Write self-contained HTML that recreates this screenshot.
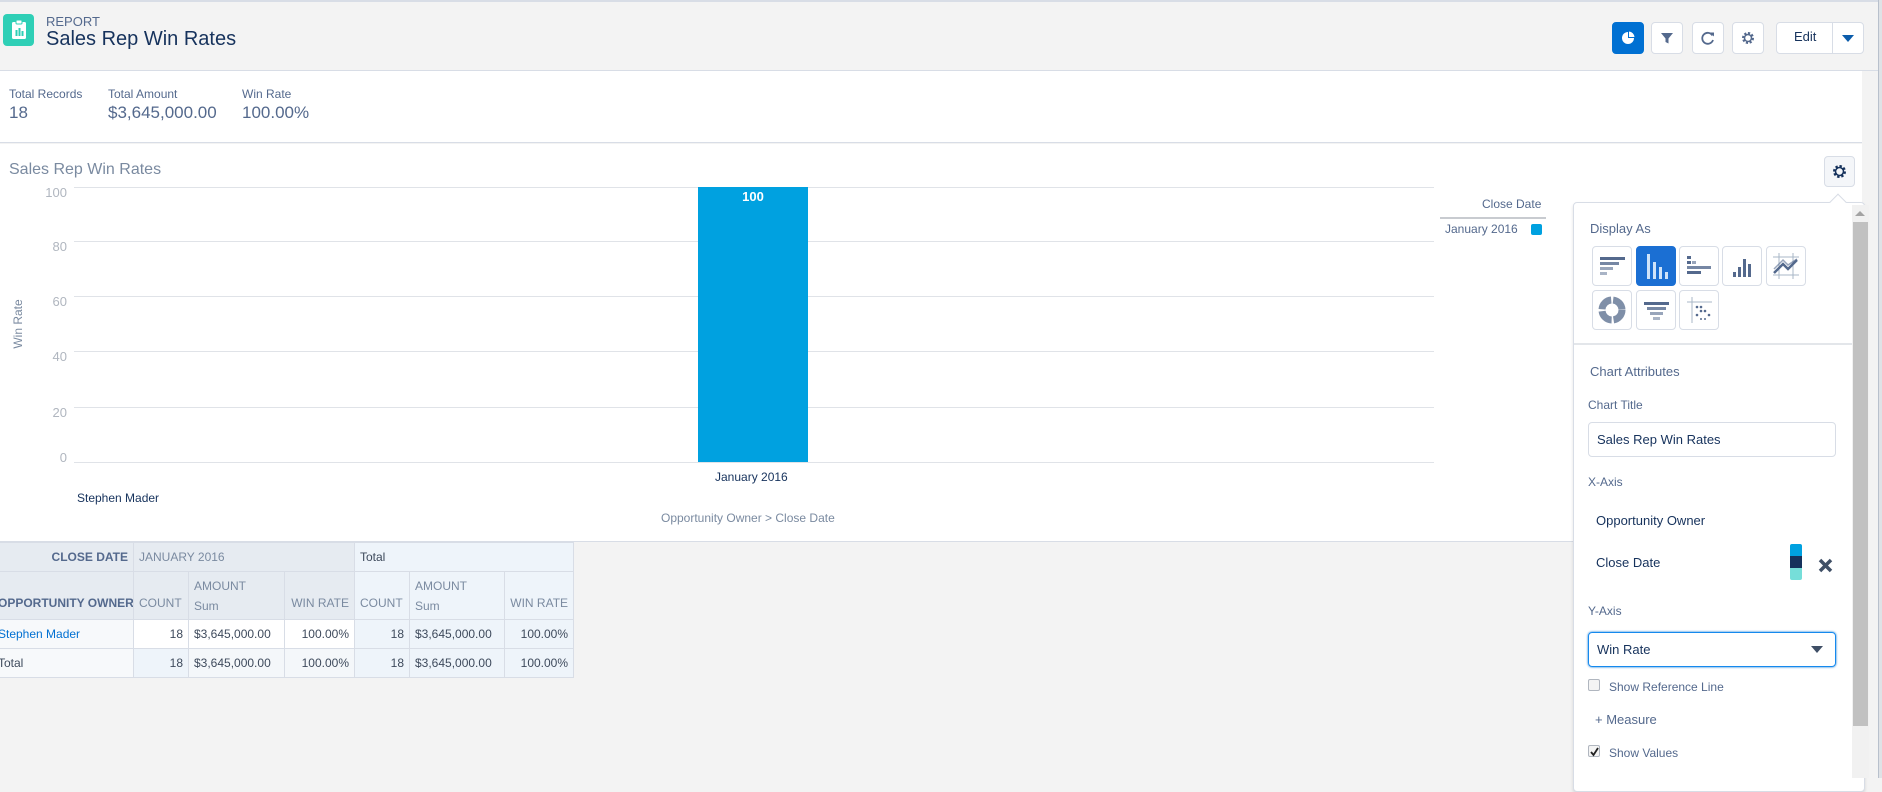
<!DOCTYPE html>
<html><head><meta charset="utf-8"><style>
*{box-sizing:border-box;margin:0;padding:0}
body{width:1882px;height:778px;overflow:hidden;background:#f3f3f3;font-family:"Liberation Sans",sans-serif;color:#16325c;position:relative}
.a{position:absolute;white-space:nowrap}
.btn{position:absolute;top:22px;width:32px;height:32px;border:1px solid #d8dde6;border-radius:4px;background:#fff}
.lbl{color:#54698d;font-size:13px}
.ic{position:absolute;width:40px;height:40px;border:1px solid #d8dde6;border-radius:4px;background:#fff}
table{table-layout:fixed}
td{border:1px solid #d8dde6;font-size:12px;color:#3e4a5c;padding:0 5px;white-space:nowrap;overflow:hidden}
</style></head><body>
<!-- header -->
<div class="a" style="left:0;top:0;width:1882px;height:71px;background:#f3f3f3;border-top:2px solid #d8dde6;border-bottom:1px solid #d8dde6"></div>
<div class="a" style="left:3px;top:14px;width:31px;height:32px;border-radius:4px;background:#2fcfb6"></div>
<svg class="a" style="left:9px;top:19px" width="20" height="22" viewBox="0 0 20 22"><rect x="3" y="3" width="14" height="17" rx="1.5" fill="#fff"/><rect x="7" y="1" width="6" height="4" rx="1" fill="#fff" stroke="#2fcfb6" stroke-width="1"/><rect x="6.5" y="11" width="2" height="6" fill="#2fcfb6"/><rect x="9.5" y="9" width="2" height="8" fill="#2fcfb6"/><rect x="12.5" y="12" width="2" height="5" fill="#2fcfb6"/></svg>
<div class="a" style="left:46px;top:14px;font-size:13px;color:#54698d">REPORT</div>
<div class="a" style="left:46px;top:28px;font-size:20px;color:#16325c">Sales Rep Win Rates</div>
<div class="btn" style="left:1612px;background:#0070d2;border-color:#0070d2"><svg width="30" height="30" viewBox="0 0 30 30"><circle cx="15" cy="15" r="6" fill="#fff"/><path d="M15 15 L15 8 A7 7 0 0 1 22 15Z" fill="#0070d2"/><path d="M16 14 L16 8.5 A6 6 0 0 1 21.5 14Z" fill="#fff"/></svg></div>
<div class="btn" style="left:1651px"><svg width="30" height="30" viewBox="0 0 30 30"><path d="M9 10h12l-4.5 5.5v5l-3 -1.5v-3.5z" fill="#54698d"/></svg></div>
<div class="btn" style="left:1692px"><svg width="30" height="30" viewBox="0 0 30 30"><path d="M19.5 12.5A5.5 5.5 0 1 0 20 17" fill="none" stroke="#54698d" stroke-width="1.8"/><path d="M17 9.5h4v4z" fill="#54698d"/></svg></div>
<div class="btn" style="left:1732px"><svg width="30" height="30" viewBox="0 0 30 30"><circle cx="15" cy="15" r="4.5" fill="none" stroke="#54698d" stroke-width="3" stroke-dasharray="2 1.5"/><circle cx="15" cy="15" r="3.5" fill="none" stroke="#54698d" stroke-width="1.5"/></svg></div>
<div class="btn" style="left:1776px;width:88px"></div>
<div class="a" style="left:1832px;top:23px;width:1px;height:30px;background:#d8dde6"></div>
<div class="a" style="left:1794px;top:29px;font-size:13px;color:#16325c">Edit</div>
<svg class="a" style="left:1841px;top:34px" width="14" height="9"><path d="M1 1h12l-6 7z" fill="#0b5cab"/></svg>
<!-- stats -->
<div class="a" style="left:0;top:71px;width:1862px;height:72px;background:#fff;border-bottom:1px solid #d8dde6"></div>
<div class="a lbl" style="left:9px;top:87px;font-size:12px">Total Records</div>
<div class="a" style="left:9px;top:103px;font-size:17px;color:#54698d">18</div>
<div class="a lbl" style="left:108px;top:87px;font-size:12px">Total Amount</div>
<div class="a" style="left:108px;top:103px;font-size:17px;color:#54698d">$3,645,000.00</div>
<div class="a lbl" style="left:242px;top:87px;font-size:12px">Win Rate</div>
<div class="a" style="left:242px;top:103px;font-size:17px;color:#54698d">100.00%</div>
<!-- chart -->
<div class="a" style="left:0;top:144px;width:1862px;height:398px;background:#fff;border-bottom:1px solid #d8dde6"></div>
<div class="a" style="left:9px;top:161px;font-size:16px;color:#7a8aa0">Sales Rep Win Rates</div>
<svg class="a" style="left:0;top:180px" width="1440" height="300">
<g stroke="#e0e3e8" stroke-width="1"><line x1="74" x2="1434" y1="7.5" y2="7.5"/><line x1="74" x2="1434" y1="61.5" y2="61.5"/><line x1="74" x2="1434" y1="116.5" y2="116.5"/><line x1="74" x2="1434" y1="171.5" y2="171.5"/><line x1="74" x2="1434" y1="227.5" y2="227.5"/><line x1="74" x2="1434" y1="282.5" y2="282.5"/></g>
<g font-size="13" fill="#b0b6bf" text-anchor="end" font-family="Liberation Sans"><text x="67" y="17">100</text><text x="67" y="71">80</text><text x="67" y="126">60</text><text x="67" y="181">40</text><text x="67" y="237">20</text><text x="67" y="282">0</text></g>
<rect x="698" y="7" width="110" height="275" fill="#00a1e0"/>
<text x="753" y="21" fill="#fff" font-size="13" font-weight="bold" text-anchor="middle" font-family="Liberation Sans">100</text>
<text transform="translate(22,144) rotate(-90)" fill="#7a8aa0" font-size="12" text-anchor="middle" font-family="Liberation Sans">Win Rate</text>
</svg>
<div class="a" style="left:715px;top:470px;font-size:12px;color:#16325c">January 2016</div>
<div class="a" style="left:77px;top:491px;font-size:12px;color:#16325c">Stephen Mader</div>
<div class="a" style="left:661px;top:511px;font-size:12px;color:#7a8aa0">Opportunity Owner &gt; Close Date</div>
<div class="a" style="left:1482px;top:197px;font-size:12px;color:#54698d">Close Date</div>
<div class="a" style="left:1440px;top:217px;width:106px;height:2px;background:#c8cbd0"></div>
<div class="a" style="left:1445px;top:222px;font-size:12px;color:#54698d">January 2016</div>
<div class="a" style="left:1531px;top:224px;width:11px;height:11px;border-radius:2px;background:#00a1e0"></div>
<!-- table -->
<table class="a" style="left:-8px;top:542px;width:581px;border-collapse:collapse;background:#fff">
<colgroup><col style="width:141px"><col style="width:55px"><col style="width:96px"><col style="width:70px"><col style="width:55px"><col style="width:95px"><col style="width:69px"></colgroup>
<tr style="height:29px"><td style="text-align:right;background:#e6ebf1;font-weight:bold;color:#54698d">CLOSE DATE</td><td colspan="3" style="background:#e6ebf1;color:#7a8aa0">JANUARY 2016</td><td colspan="3" style="background:#eef4fa;color:#3e4a5c">Total</td></tr>
<tr style="height:48px"><td style="text-align:right;background:#e6ebf1;font-weight:bold;color:#54698d;vertical-align:bottom;padding-bottom:9px">OPPORTUNITY OWNER</td><td style="background:#e6ebf1;color:#7a8aa0;vertical-align:bottom;padding-bottom:9px">COUNT</td><td style="background:#e6ebf1;color:#7a8aa0;line-height:20px">AMOUNT<br>Sum</td><td style="background:#e6ebf1;color:#7a8aa0;text-align:right;vertical-align:bottom;padding-bottom:9px">WIN RATE</td><td style="background:#eef4fa;color:#7a8aa0;vertical-align:bottom;padding-bottom:9px">COUNT</td><td style="background:#eef4fa;color:#7a8aa0;line-height:20px">AMOUNT<br>Sum</td><td style="background:#eef4fa;color:#7a8aa0;text-align:right;vertical-align:bottom;padding-bottom:9px">WIN RATE</td></tr>
<tr style="height:29px"><td style="background:#f7f9fb;color:#0070d2">Stephen Mader</td><td style="text-align:right">18</td><td>$3,645,000.00</td><td style="text-align:right">100.00%</td><td style="text-align:right;background:#eef4fa">18</td><td style="background:#eef4fa">$3,645,000.00</td><td style="text-align:right;background:#eef4fa">100.00%</td></tr>
<tr style="height:29px"><td style="background:#f7f9fb">Total</td><td style="text-align:right;background:#eef4fa">18</td><td style="background:#f4f7fa">$3,645,000.00</td><td style="text-align:right;background:#f4f7fa">100.00%</td><td style="text-align:right;background:#eef4fa">18</td><td style="background:#eef4fa">$3,645,000.00</td><td style="text-align:right;background:#eef4fa">100.00%</td></tr>
</table>
<!-- right edge -->
<div class="a" style="left:1878px;top:0;width:4px;height:778px;background:#dfe2e6;border-left:1px solid #b8c0cc"></div>
<!-- chart gear -->
<div class="a" style="left:1824px;top:156px;width:31px;height:31px;border:1px solid #d8dde6;border-radius:4px;background:#f4f6f9"></div>
<svg class="a" style="left:1831px;top:163px" width="17" height="17" viewBox="0 0 17 17"><circle cx="8.5" cy="8.5" r="5" fill="none" stroke="#16325c" stroke-width="3" stroke-dasharray="2.2 1.7"/><circle cx="8.5" cy="8.5" r="4" fill="none" stroke="#16325c" stroke-width="1.6"/></svg>
<!-- popover -->
<div class="a" style="left:1573px;top:202px;width:292px;height:590px;background:#fff;border:1px solid #d8dde6;border-radius:4px;box-shadow:0 2px 3px rgba(0,0,0,.12)"></div>
<div class="a" style="left:1832px;top:196px;width:12px;height:12px;background:#fff;border-left:1px solid #d8dde6;border-top:1px solid #d8dde6;transform:rotate(45deg)"></div>
<div class="a" style="left:1852px;top:205px;width:17px;height:573px;background:#f1f1f1"></div>
<svg class="a" style="left:1855px;top:210px" width="11" height="7"><path d="M0 6h10l-5-5z" fill="#a3a3a3"/></svg>
<div class="a" style="left:1853px;top:222px;width:15px;height:504px;background:#c1c1c1"></div>
<div class="a lbl" style="left:1590px;top:221px">Display As</div>
<div class="ic" style="left:1592px;top:246px"><svg width="38" height="38"><g fill="#54698d"><rect x="7" y="10" width="25" height="3"/><rect x="7" y="15" width="19" height="3" opacity=".8"/><rect x="7" y="20" width="13" height="3" opacity=".6"/><rect x="7" y="25" width="7" height="3" opacity=".5"/></g></svg></div>
<div class="ic" style="left:1636px;top:246px;background:#1b6fd3;border-color:#1b6fd3"><svg width="38" height="38"><g fill="#cfe3f9"><rect x="10" y="7" width="3" height="25"/><rect x="16" y="15" width="3" height="17"/><rect x="22" y="20" width="3" height="12"/><rect x="28" y="25" width="3" height="7"/></g></svg></div>
<div class="ic" style="left:1679px;top:246px"><svg width="38" height="38"><g fill="#54698d"><rect x="7" y="9" width="4" height="3"/><rect x="7" y="14" width="4" height="3"/><rect x="12" y="14" width="4" height="3" opacity=".6"/><rect x="7" y="19" width="24" height="3" opacity=".8"/><rect x="7" y="24" width="14" height="3"/></g></svg></div>
<div class="ic" style="left:1722px;top:246px"><svg width="38" height="38"><g fill="#54698d"><rect x="10" y="25" width="3" height="5"/><rect x="15" y="20" width="3" height="10"/><rect x="20" y="12" width="3" height="18"/><rect x="25" y="17" width="3" height="13"/></g></svg></div>
<div class="ic" style="left:1766px;top:246px"><svg width="38" height="38"><g stroke="#a8b7c7" stroke-width="1"><line x1="6" x2="32" y1="10" y2="10"/><line x1="6" x2="32" y1="28" y2="28"/><line x1="12" x2="12" y1="6" y2="32"/><line x1="26" x2="26" y1="6" y2="32"/></g><path d="M7 26l9-9 5 5 9-9" fill="none" stroke="#54698d" stroke-width="2.5"/><path d="M7 22l9-9 5 5 9-6" fill="none" stroke="#54698d" stroke-width="1.5" opacity=".6"/></svg></div>
<div class="ic" style="left:1592px;top:290px"><svg width="38" height="38"><circle cx="19" cy="19" r="10" fill="none" stroke="#7f8fa8" stroke-width="7" stroke-dasharray="14 2"/></svg></div>
<div class="ic" style="left:1636px;top:290px"><svg width="38" height="38"><g fill="#54698d"><rect x="7" y="11" width="25" height="3"/><rect x="10" y="16" width="19" height="3" opacity=".8"/><rect x="13" y="21" width="13" height="3" opacity=".6"/><rect x="16" y="26" width="7" height="3" opacity=".5"/></g></svg></div>
<div class="ic" style="left:1679px;top:290px"><svg width="38" height="38"><g stroke="#a8b7c7"><line x1="7" x2="32" y1="11" y2="11"/><line x1="12" x2="12" y1="6" y2="32"/></g><g fill="#54698d"><circle cx="17" cy="16" r="1.3"/><circle cx="21" cy="16" r="1.3"/><circle cx="25" cy="20" r="1.3"/><circle cx="17" cy="24" r="1.3"/><circle cx="21" cy="20" r="1.3"/><circle cx="29" cy="24" r="1.3"/><circle cx="21" cy="28" r="1"/><circle cx="25" cy="28" r="1"/></g></svg></div>
<div class="a" style="left:1574px;top:343px;width:278px;height:2px;background:#e3e6ea"></div>
<div class="a lbl" style="left:1590px;top:364px">Chart Attributes</div>
<div class="a lbl" style="left:1588px;top:398px;font-size:12px">Chart Title</div>
<div class="a" style="left:1588px;top:422px;width:248px;height:35px;border:1px solid #d8dde6;border-radius:4px"></div>
<div class="a" style="left:1597px;top:432px;font-size:13px;color:#16325c">Sales Rep Win Rates</div>
<div class="a lbl" style="left:1588px;top:475px;font-size:12px">X-Axis</div>
<div class="a" style="left:1596px;top:513px;font-size:13px;color:#16325c">Opportunity Owner</div>
<div class="a" style="left:1596px;top:555px;font-size:13px;color:#16325c">Close Date</div>
<div class="a" style="left:1790px;top:544px;width:12px;height:12px;background:#00a1e0;border-radius:2px 2px 0 0"></div>
<div class="a" style="left:1790px;top:556px;width:12px;height:12px;background:#16325c"></div>
<div class="a" style="left:1790px;top:568px;width:12px;height:12px;background:#76ded9;border-radius:0 0 2px 2px"></div>
<svg class="a" style="left:1818px;top:558px" width="15" height="15"><path d="M2 2L13 13M13 2L2 13" stroke="#3f4f66" stroke-width="3.5"/></svg>
<div class="a lbl" style="left:1588px;top:604px;font-size:12px">Y-Axis</div>
<div class="a" style="left:1588px;top:632px;width:248px;height:35px;border:1px solid #1589ee;border-radius:4px;box-shadow:0 0 2px #0070d2"></div>
<div class="a" style="left:1597px;top:642px;font-size:13px;color:#16325c">Win Rate</div>
<svg class="a" style="left:1811px;top:646px" width="13" height="8"><path d="M0 0h12l-6 7z" fill="#3f4f66"/></svg>
<div class="a" style="left:1588px;top:679px;width:12px;height:12px;border:1px solid #b0b6bf;border-radius:2px;background:#f4f4f4"></div>
<div class="a" style="left:1609px;top:680px;font-size:12px;color:#54698d">Show Reference Line</div>
<div class="a" style="left:1595px;top:712px;font-size:13px;color:#54698d">+ Measure</div>
<div class="a" style="left:1588px;top:745px;width:12px;height:12px;border:1px solid #b0b6bf;border-radius:2px;background:#f4f4f4"></div>
<svg class="a" style="left:1589px;top:746px" width="11" height="11"><path d="M2 6l2.5 3L9 2" fill="none" stroke="#222" stroke-width="1.8"/></svg>
<div class="a" style="left:1609px;top:746px;font-size:12px;color:#54698d">Show Values</div>
</body></html>
